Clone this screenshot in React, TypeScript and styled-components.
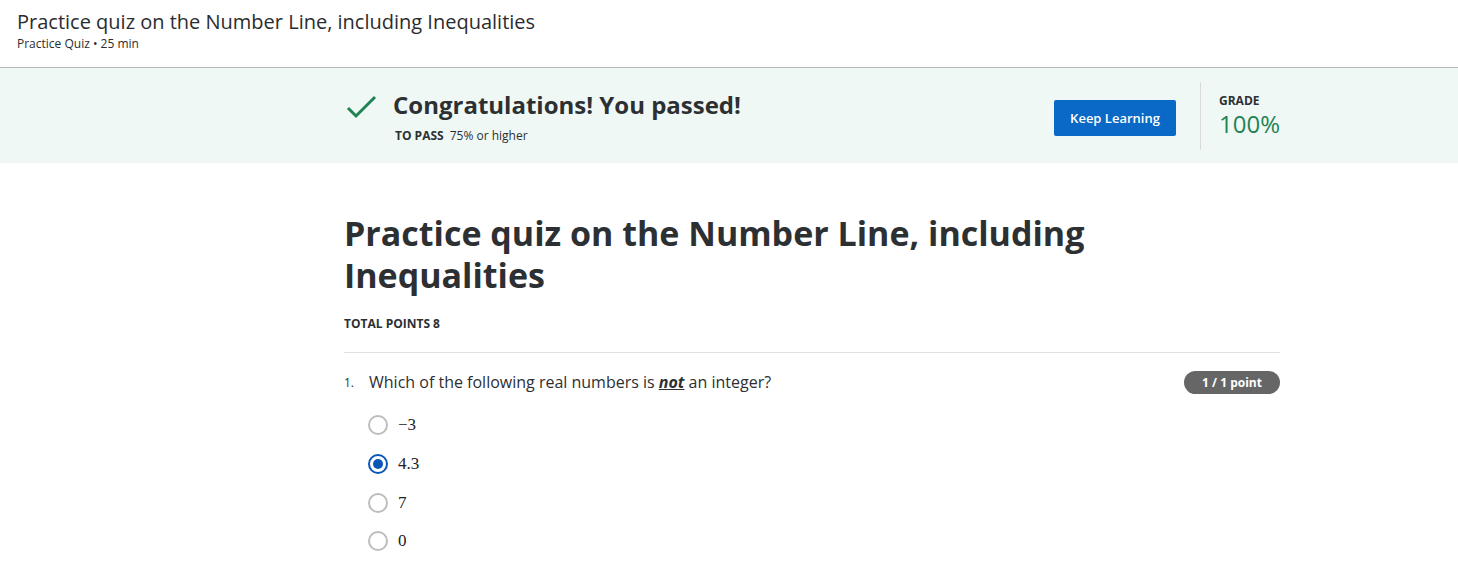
import React from "react";
import styled, { createGlobalStyle } from "styled-components";

const Global = createGlobalStyle`
  html, body { margin: 0; padding: 0; background: #fff; }
  body { font-family: "Open Sans", "Noto Sans", sans-serif; color: #373a3c; }
  * { box-sizing: border-box; }
`;

const Header = styled.header`
  height: 68px;
  padding: 8px 17px 0;
  border-bottom: 1px solid #b8b8b8;
`;

const HeaderTitle = styled.div`
  font-size: 20px;
  line-height: 28px;
  color: #2a2d2f;
`;

const HeaderSub = styled.div`
  font-size: 12px;
  line-height: 16px;
  color: #2a2d2f;
`;

const Banner = styled.section`
  background: #f0f8f5;
  height: 95px;
  display: flex;
  padding-left: 344px;
`;

const Column = styled.div`
  width: 936px;
`;

const BannerInner = styled(Column)`
  display: flex;
  align-items: center;
`;

const PassGroup = styled.div`
  flex: 1;
  display: flex;
  align-items: flex-start;
  gap: 16px;
  padding-top: 2px;
`;

const CheckIcon = styled.svg`
  width: 32px;
  height: 32px;
  margin-top: 2px;
  margin-left: 1px;
`;

const PassText = styled.div`
  display: flex;
  flex-direction: column;
`;

const PassTitle = styled.div`
  font-size: 24px;
  font-weight: 700;
  line-height: 32px;
  color: #2d3033;
`;

const PassReq = styled.div`
  font-size: 12px;
  line-height: 18px;
  margin-top: 6px;
  padding-left: 2px;
  color: #2d3033;
  b { font-weight: 700; margin-right: 6px; }
`;

const Button = styled.button`
  width: 122px;
  height: 36px;
  background: #0a68c6;
  border: none;
  border-radius: 2px;
  color: #fff;
  font-family: inherit;
  font-size: 13px;
  font-weight: 600;
  cursor: pointer;
  margin-right: 24px;
  margin-top: 4px;
`;

const GradeBox = styled.div`
  border-left: 1px solid #d9d9d9;
  height: 68px;
  padding-left: 18px;
  width: 80px;
  display: flex;
  flex-direction: column;
  padding-top: 12px;
`;

const GradeLabel = styled.div`
  font-size: 12px;
  font-weight: 700;
  line-height: 14px;
  color: #2d3033;
`;

const GradeValue = styled.div`
  font-size: 24px;
  line-height: 32px;
  color: #1f8354;
`;

const Main = styled.main`
  display: flex;
  padding-left: 344px;
  padding-top: 49px;
`;

const Title = styled.h1`
  margin: 0;
  font-size: 34px;
  line-height: 42px;
  font-weight: 700;
  color: #2d3033;
`;

const TotalPoints = styled.div`
  margin-top: 19px;
  font-size: 12px;
  font-weight: 700;
  line-height: 18px;
  color: #2d3033;
`;

const Rule = styled.hr`
  border: none;
  border-top: 1px solid #e1e1e1;
  margin: 19px 0 0;
`;

const QuestionRow = styled.div`
  display: flex;
  align-items: center;
  margin-top: 17px;
`;

const QNum = styled.span`
  width: 25px;
  font-size: 12px;
  color: #2d3033;
`;

const QText = styled.div`
  flex: 1;
  font-size: 16px;
  line-height: 24px;
  color: #2d3033;
  em { font-weight: 700; text-decoration: underline; }
`;

const Badge = styled.span`
  width: 96px;
  height: 23px;
  border-radius: 12px;
  background: #666;
  color: #fff;
  font-size: 12px;
  font-weight: 700;
  display: flex;
  align-items: center;
  justify-content: center;
`;

const Options = styled.div`
  display: flex;
  flex-direction: column;
  padding-left: 24px;
  margin-top: 12px;
`;

const Option = styled.label`
  display: flex;
  align-items: center;
  gap: 10px;
  height: 38.7px;
`;

const Radio = styled.span<{ $checked?: boolean }>`
  width: 20px;
  height: 20px;
  border-radius: 50%;
  border: 2px solid ${(p) => (p.$checked ? "#0a57b7" : "#bdbdbd")};
  display: flex;
  align-items: center;
  justify-content: center;
  &::after {
    content: "";
    width: 10px;
    height: 10px;
    border-radius: 50%;
    background: ${(p) => (p.$checked ? "#0a57b7" : "transparent")};
  }
`;

const MathText = styled.span`
  font-family: "Liberation Serif", "DejaVu Serif", serif;
  font-size: 17px;
  color: #222;
`;

const options = ["\u22123", "4.3", "7", "0"];

export default function App() {
  return (
    <>
      <Global />
      <Header>
        <HeaderTitle>Practice quiz on the Number Line, including Inequalities</HeaderTitle>
        <HeaderSub>Practice Quiz • 25 min</HeaderSub>
      </Header>
      <Banner>
        <BannerInner>
          <PassGroup>
            <CheckIcon viewBox="0 0 32 32" fill="none">
              <path d="M3 17 L11 25 L30 6" stroke="#1f8354" strokeWidth="3" />
            </CheckIcon>
            <PassText>
              <PassTitle>Congratulations! You passed!</PassTitle>
              <PassReq>
                <b>TO PASS</b>75% or higher
              </PassReq>
            </PassText>
          </PassGroup>
          <Button>Keep Learning</Button>
          <GradeBox>
            <GradeLabel>GRADE</GradeLabel>
            <GradeValue>100%</GradeValue>
          </GradeBox>
        </BannerInner>
      </Banner>
      <Main>
        <Column>
          <Title>Practice quiz on the Number Line, including Inequalities</Title>
          <TotalPoints>TOTAL POINTS 8</TotalPoints>
          <Rule />
          <QuestionRow>
            <QNum>1.</QNum>
            <QText>
              Which of the following real numbers is <em>not</em> an integer?
            </QText>
            <Badge>1 / 1 point</Badge>
          </QuestionRow>
          <Options>
            {options.map((o, i) => (
              <Option key={o}>
                <Radio $checked={i === 1} />
                <MathText>{o}</MathText>
              </Option>
            ))}
          </Options>
        </Column>
      </Main>
    </>
  );
}
